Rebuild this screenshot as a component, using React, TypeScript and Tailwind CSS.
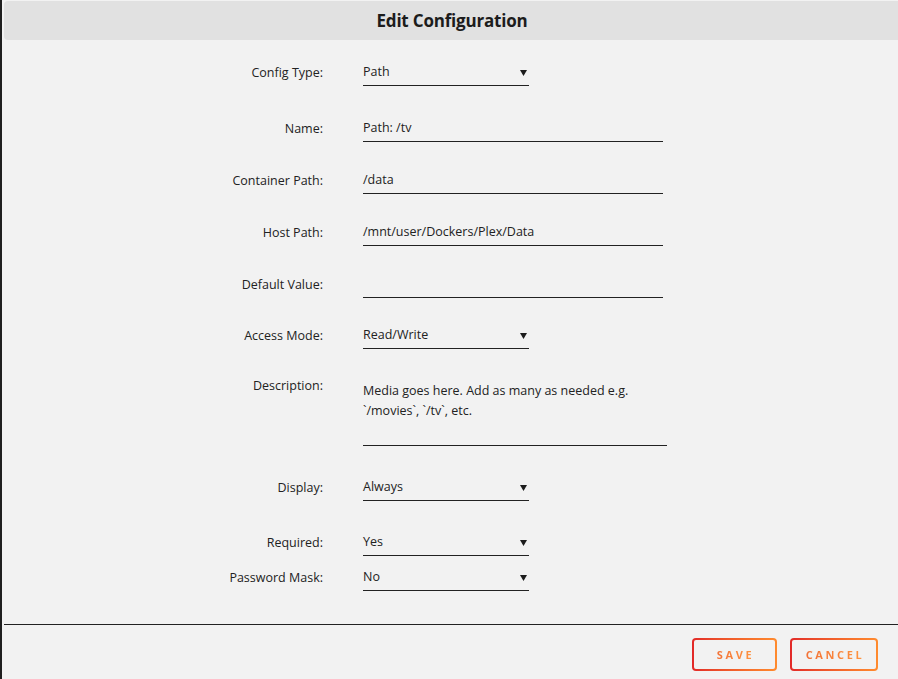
import React from "react";

interface Field {
    label: string;
    value: string;
    kind: "select" | "text";
    mt: string;
}

const fields: Field[] = [
    { label: "Config Type:", value: "Path", kind: "select", mt: "mt-[18px]" },
    { label: "Name:", value: "Path: /tv", kind: "text", mt: "mt-[28px]" },
    { label: "Container Path:", value: "/data", kind: "text", mt: "mt-[24px]" },
    { label: "Host Path:", value: "/mnt/user/Dockers/Plex/Data", kind: "text", mt: "mt-[24px]" },
    { label: "Default Value:", value: "", kind: "text", mt: "mt-[24px]" },
    { label: "Access Mode:", value: "Read/Write", kind: "select", mt: "mt-[23px]" },
];

const lower: Field[] = [
    { label: "Display:", value: "Always", kind: "select", mt: "mt-[27px]" },
    { label: "Required:", value: "Yes", kind: "select", mt: "mt-[27px]" },
    { label: "Password Mask:", value: "No", kind: "select", mt: "mt-[7px]" },
];

function Arrow() {
    return (
        <svg width="7" height="6" viewBox="0 0 7 6" className="mr-[2px]">
            <polygon points="0,0 7,0 3.5,6" fill="#1c1c1c" />
        </svg>
    );
}

function Row({ field }: { field: Field }) {
    return (
        <div className={`flex items-start ${field.mt}`}>
            <div className="w-[319px] h-[28px] pt-[2px] flex items-center justify-end">{field.label}</div>
            <div
                className={`ml-[40px] h-[28px] pt-[2px] flex items-center justify-between border-b border-[#222] ${
                    field.kind === "select" ? "w-[166px]" : "w-[300px]"
                }`}
            >
                <span>{field.value}</span>
                {field.kind === "select" && <Arrow />}
            </div>
        </div>
    );
}

function GradientButton({ label, width }: { label: string; width: string }) {
    return (
        <div className={`${width} h-[33px] rounded-[4px] p-[2px] bg-gradient-to-r from-[#e22828] to-[#ff8b2e]`}>
            <div className="w-full h-full rounded-[2px] bg-[#f2f2f2] flex items-center justify-center pt-[1px]">
                <span className="text-[11px] font-bold tracking-[2.6px] pl-[2px] bg-gradient-to-r from-[#f27035] to-[#ff9440] bg-clip-text text-transparent">
                    {label}
                </span>
            </div>
        </div>
    );
}

export default function App() {
    return (
        <div
            className="w-[898px] h-[679px] overflow-hidden bg-[#f2f2f2] border-l-2 border-[#1f1f1f] text-[12.5px] text-[#222]"
            style={{ fontFamily: '"Open Sans", "Liberation Sans", sans-serif' }}
        >
            <div className="pl-[2px]">
                {/* Header */}
                <div className="mt-[1px] h-[39px] w-[900px] rounded-[4px] bg-[#e1e1e1] flex items-center justify-center pr-[4px]">
                    <h1 className="text-[17px] font-bold text-[#1c1c1c] tracking-[-0.2px]">Edit Configuration</h1>
                </div>

                {fields.map((f) => (
                    <Row key={f.label} field={f} />
                ))}

                {/* Description */}
                <div className="flex items-start mt-[26px]">
                    <div className="w-[319px] leading-[20px] pt-[1px] text-right">Description:</div>
                    <div className="ml-[40px] w-[304px] h-[71px] pt-[6px] leading-[20px] border-b border-[#222]">
                        Media goes here. Add as many as needed e.g.
                        <br />
                        `/movies`, `/tv`, etc.
                    </div>
                </div>

                {lower.map((f) => (
                    <Row key={f.label} field={f} />
                ))}

                <div className="mt-[33px] border-t border-[#222]" />

                <div className="mt-[13px] flex justify-end gap-[13px] pr-[20px]">
                    <GradientButton label="SAVE" width="w-[85px]" />
                    <GradientButton label="CANCEL" width="w-[88px]" />
                </div>
            </div>
        </div>
    );
}
